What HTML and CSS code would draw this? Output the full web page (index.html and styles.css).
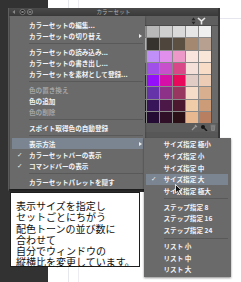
FILE: index.html
```html
<html>
<head>
<title>カラーセット</title>
<link rel="stylesheet" href="styles.css">
</head>
<body>

<div class="side"></div>
<div class="canvas"></div>

<div class="win">
	<div class="titlebar">
		<svg class="btns" width="24" height="8" viewBox="0 0 24 8">
			<path d="M4 2 L1.5 4 L4 6 Z" fill="#8a8a8a"/>
			<circle cx="11.5" cy="4" r="2.6" fill="#1e1e1e" stroke="#8a8a8a" stroke-width="0.8"/>
			<path d="M10.4 2.9 L12.6 5.1 M12.6 2.9 L10.4 5.1" stroke="#cfcfcf" stroke-width="0.7"/>
			<circle cx="19" cy="4" r="2.6" fill="#3a3a3a" stroke="#8a8a8a" stroke-width="0.8"/>
			<path d="M17.7 4 H20.3" stroke="#cfcfcf" stroke-width="0.8"/>
		</svg>
		<div class="title">カラーセット</div>
		<div></div>
	</div>
	<div class="wbody">
		<div class="setbar"></div>
		<div class="panel">
			<div class="phead">
				<svg width="5" height="8" viewBox="0 0 5 8"><path d="M2.5 0.5 L4.5 3.3 H0.5 Z M2.5 7.5 L4.5 4.7 H0.5 Z" fill="#262626"/></svg>
				<svg width="9" height="8" viewBox="0 0 9 8"><path d="M1 1 L4.5 4.2 L8 1 M4.5 4.2 V7.5" stroke="#e6e6e6" stroke-width="1.6" fill="none"/></svg>
			</div>
			<div class="gridrow">
				<div class="grid" id="grid"></div>
				<div class="scroll"></div>
			</div>
			<div class="pfoot">
				<svg width="7" height="7" viewBox="0 0 7 7"><path d="M1 6 L5 2 M4 1 L6 3" stroke="#9a9a9a" stroke-width="1.2"/></svg>
				<svg width="8" height="7" viewBox="0 0 8 7"><circle cx="3" cy="3" r="2" fill="#151515"/><path d="M4.3 4.3 L7 7" stroke="#151515" stroke-width="1.5"/></svg>
				<svg width="6" height="7" viewBox="0 0 6 7"><path d="M0.5 1.2 H5.5 M1.2 2 H4.8 L4.4 6.5 H1.6 Z" stroke="#8a8a8a" stroke-width="0.8" fill="#7a7a7a"/></svg>
			</div>
		</div>
	</div>
</div>

<ul class="menu">
	<li><span class="ck"></span>カラーセットの編集...</li>
	<li><span class="ck"></span>カラーセットの切り替え<span class="arr"></span></li>
	<li class="sep"></li>
	<li><span class="ck"></span>カラーセットの読み込み...</li>
	<li><span class="ck"></span>カラーセットの書き出し...</li>
	<li><span class="ck"></span>カラーセットを素材として登録...</li>
	<li class="sep"></li>
	<li class="off"><span class="ck"></span>色の置き換え</li>
	<li><span class="ck"></span>色の追加</li>
	<li class="off"><span class="ck"></span>色の削除</li>
	<li class="sep"></li>
	<li><span class="ck"></span>スポイト取得色の自動登録</li>
	<li class="sep"></li>
	<li class="hi"><span class="ck"></span>表示方法<span class="arr"></span></li>
	<li><span class="ck">✓</span>カラーセットバーの表示</li>
	<li><span class="ck">✓</span>コマンドバーの表示</li>
	<li class="sep"></li>
	<li><span class="ck"></span>カラーセットパレットを隠す</li>
</ul>

<ul class="menu sub">
	<li><span class="ck"></span>サイズ指定 極小</li>
	<li><span class="ck"></span>サイズ指定 小</li>
	<li><span class="ck"></span>サイズ指定 中</li>
	<li class="hi"><span class="ck">✓</span>サイズ指定 大</li>
	<li><span class="ck"></span>サイズ指定 極大</li>
	<li class="sep"></li>
	<li><span class="ck"></span>ステップ指定 8</li>
	<li><span class="ck"></span>ステップ指定 16</li>
	<li><span class="ck"></span>ステップ指定 24</li>
	<li class="sep"></li>
	<li><span class="ck"></span>リスト 小</li>
	<li><span class="ck"></span>リスト 中</li>
	<li><span class="ck"></span>リスト 大</li>
</ul>

<div class="note">表示サイズを指定し<br>セットごとにちがう<br>配色トーンの並び数に<br>合わせて<br>自分でウィンドウの<br>縦横比を変更しています。</div>

<svg class="cursor" width="8" height="12" viewBox="0 0 8 12">
	<path d="M0.5 0.5 L0.5 9 L2.6 7.1 L4 10.6 L5.5 10 L4.1 6.6 L6.9 6.6 Z" fill="#111" stroke="#fff" stroke-width="0.8"/>
</svg>

<script type="text/javascript">
// first column is the sliver of the previous (scrolled off) column
rows = [
	["#a8a8a8", "#b8b8b8", "#cfcfcf", "#dadada", "#e6e6e6", "#efefef"],
	["#c8d0e0", "#36332e", "#4e463c", "#5c5042", "#a48870", "#b8a090"],
	["#a080e8", "#c090f8", "#e090ec", "#ec98c8", "#f8e4dc", "#fae6d8"],
	["#6a40e0", "#a050e8", "#c850cc", "#d84888", "#f4e0d8", "#f8dcc8"],
	["#2010f0", "#9410f8", "#d410a8", "#e8085c", "#e0ccc4", "#ecccb4"],
	["#402090", "#6434a8", "#8c3088", "#983860", "#f4dcc8", "#d8b090"],
	["#281040", "#381458", "#4c1848", "#4c1830", "#f0cca8", "#cc9c78"],
	["#180828", "#240c34", "#301028", "#2c1018", "#e8b890", "#b88060"]
];

str = "";
for (r = 0; r < rows.length; r++) {
	for (c = 0; c < rows[r].length; c++) {
		str += '<div style="background:' + rows[r][c] + '"></div>';
	}
}
document.getElementById('grid').innerHTML = str;
</script>
</body>
</html>
```

FILE: styles.css
```css
* {
  box-sizing: border-box;
}

body {
  margin: 0;
  width: 241px;
  height: 282px;
  overflow: hidden;
  position: relative;
  display: flex;
  background: #fff;
  font-family: "Noto Sans CJK JP", sans-serif;
}

.side {
  width: 48px;
  background: #323232;
}

.canvas {
  flex: 1;
  background:
    linear-gradient(90deg, transparent 20px, #e6e6ee 20px, #e6e6ee 21px, transparent 21px),
    linear-gradient(90deg, transparent 30px, #ececf2 30px, #ececf2 31px, transparent 31px),
    linear-gradient(180deg, transparent 18px, #e6e6ee 18px, #e6e6ee 19px, transparent 19px);
}

/* palette window */
.win {
  position: absolute;
  left: 8px;
  top: 8px;
  width: 212px;
  height: 184px;
  display: flex;
  flex-direction: column;
  background: #565656;
  border-left: 1px solid #5e5e5e;
  border-right: 2px solid #363636;
  border-bottom: 3px solid #2b2b2b;
}

.titlebar {
  height: 8px;
  display: grid;
  grid-template-columns: 1fr auto 1fr;
  align-items: center;
  background: linear-gradient(#4a4a4a, #3a3a3a);
}

.btns {
  margin-left: 2px;
  display: block;
}

.title {
  font-size: 5.5px;
  line-height: 8px;
  color: #b4b4b4;
  letter-spacing: 0.2px;
}

.wbody {
  flex: 1;
  display: flex;
}

.setbar {
  flex: 1;
  background: #5a5a5a;
}

.panel {
  width: 74px;
  display: flex;
  flex-direction: column;
  background: #575757;
}

.phead {
  height: 10px;
  display: flex;
  justify-content: flex-end;
  align-items: center;
  gap: 1px;
  padding-right: 12px;
  background: #5f5f5f;
  border-bottom: 1px solid #4a4a4a;
}

.phead svg, .pfoot svg {
  display: block;
}

.gridrow {
  height: 97px;
  display: flex;
}

.grid {
  width: 67px;
  display: grid;
  grid-template-columns: 2px repeat(5, 1fr);
  grid-template-rows: repeat(8, 1fr);
  gap: 1px;
  background: #8a8a8a;
}

.scroll {
  flex: 1;
  background: #6a6a6a;
  border-left: 1px solid #4e4e4e;
}

.pfoot {
  height: 9px;
  display: flex;
  justify-content: flex-end;
  align-items: center;
  gap: 2px;
  padding-right: 2px;
  background: #5c5c5c;
}

/* popup menus */
.menu {
  position: absolute;
  left: 10px;
  top: 16px;
  width: 135px;
  margin: 0;
  padding: 3px 0 2px;
  list-style: none;
  background: #6a6a6a;
  box-shadow: 0 1px 2px rgba(0, 0, 0, 0.45);
  font-size: 6.6px;
  font-weight: 700;
  color: #f3f3f3;
}

.menu li {
  height: 11px;
  display: flex;
  align-items: center;
  padding-left: 7px;
  white-space: nowrap;
}

.ck {
  width: 12px;
  flex: none;
  font-family: "DejaVu Sans", sans-serif;
  font-size: 6.5px;
}

.menu li.off {
  color: #a4a4a4;
}

.menu li.hi {
  background: #7b8591;
  margin: 0 2px;
  padding-left: 5px;
}

.menu li.sep {
  height: 0;
  padding: 0;
  margin: 2px 2px 2px 19px;
  border-top: 1px solid #595959;
}

.arr {
  margin-left: auto;
  margin-right: 3px;
  border-left: 3px solid #f0f0f0;
  border-top: 2.5px solid transparent;
  border-bottom: 2.5px solid transparent;
}

.menu li.hi .arr {
  margin-right: 1px;
}

.menu.sub {
  left: 144px;
  top: 138px;
  width: 87px;
  padding: 0.5px 0 2px;
}

.sub li {
  height: 11.7px;
}

.sub .ck {
  width: 12.5px;
}

.sub li.hi {
  margin: 0 3px 0 2px;
}

.sub li.sep {
  margin: 1.5px 3px 1.5px 20px;
}

/* annotation */
.note {
  position: absolute;
  left: 10px;
  top: 192px;
  width: 130px;
  height: 75px;
  background: #fff;
  border: 1px solid #1e1e1e;
  padding: 7px 0 0 5px;
  font-size: 10px;
  line-height: 11.3px;
  color: #111;
  white-space: nowrap;
}

.cursor {
  position: absolute;
  left: 175px;
  top: 184px;
}
```
